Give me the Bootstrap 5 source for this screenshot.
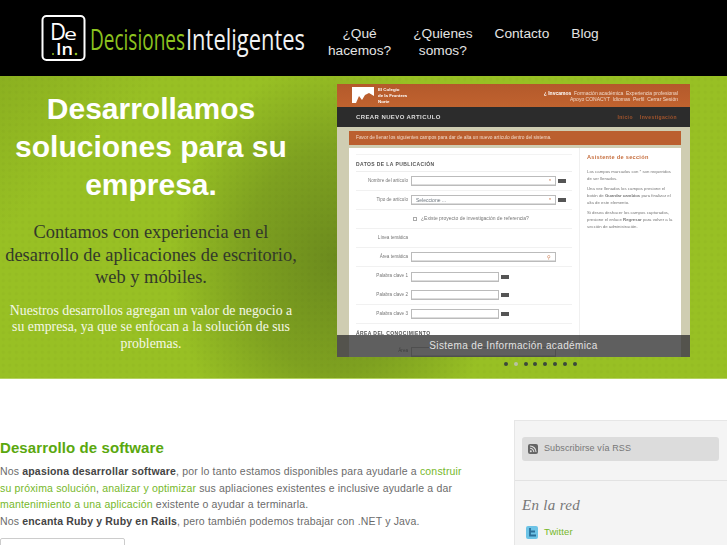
<!DOCTYPE html>
<html lang="es">
<head>
  <meta charset="UTF-8" />
  <meta name="viewport" content="width=device-width, initial-scale=1.0" />
  <title>Decisiones Inteligentes</title>
  <link href="https://cdn.jsdelivr.net/npm/bootstrap@5.3.3/dist/css/bootstrap.min.css" rel="stylesheet" />
  <style>
    body { font-family: "Liberation Sans", Arial, sans-serif; background: #fff; }
    .top-bar { height: 76px; background: #000; padding-left: 41px; }
    .logo-svg { display: block; width: 272px; height: 48px; margin-top: -1px; }
    .top-nav { margin-left: 4px; margin-top: 7px; }
    .top-nav .nav-link { color: #e4e4e4; font-size: 13.7px; line-height: 17px; padding: 0 11px; text-align: center; }
    .hero {
      height: 303px; border-bottom: 1px solid #b5d35f;
      background-color: #98c024;
      background-image:
        radial-gradient(circle, rgba(0,0,0,.02) 1.7px, transparent 2px),
        radial-gradient(ellipse 165px 200px at 335px 185px, rgba(100,130,28,.85) 0%, rgba(100,130,28,.5) 55%, rgba(100,130,28,0) 100%),
        linear-gradient(135deg, #8bb020 0, #98c024 16%, #98c024 100%);
      background-size: 6.5px 6.5px, 100% 100%, 100% 100%;
    }
    .hero-copy { width: 302px; padding-top: 14px; text-align: center; }
    .hero-copy h1 { font-size: 30px; line-height: 38px; font-weight: 700; color: #fff; margin: 0 0 17px; }
    .hero-sub { font-family: "Liberation Serif", serif; font-size: 18.4px; line-height: 22.6px; color: #33392a; margin: 0 0 14px; }
    .hero-note { font-family: "Liberation Serif", serif; font-size: 13.8px; line-height: 16.6px; color: #f4f7e6; margin: 0 8px; }
    .slider-wrap { margin-left: 35px; width: 353px; padding-top: 8px; }
    .shot { height: 273px; overflow: hidden; background: #cfcdb2; position: relative; font-size: 5px; color: #777; }
    .shot-blur { filter: blur(.35px); }
    .shot-head { height: 23px; background: linear-gradient(#b4592b, #c0632f); color: #f0d8c8; padding: 3px 12px 0 15px; }
    .shot-brand { font-weight: 700; color: #fff; line-height: 6px; font-size: 4.4px; }
    .shot-links { line-height: 6px; text-align: right; font-size: 5px; padding-top: 3px; }
    .shot-title { height: 20px; background: #2c2c2c; color: #ddd; font-size: 6px; font-weight: 700; letter-spacing: .4px; padding: 0 13px 0 19px; }
    .shot-title span { color: #a5552c; font-size: 5px; margin-left: 7px; }
    .shot-alert { margin: 4px 9px 0 12px; height: 14px; line-height: 13px; background: #bb5f2f; color: #f1d9c8; padding-left: 7px; font-size: 4.8px; }
    .shot-panel { margin: 3px 9px 0 12px; height: 230px; background: #fff; }
    .shot-main { width: 231px; padding: 6px 7px 0; border-right: 1px solid #f0f0f0; flex: none; }
    .shot-side { padding: 6px 7px; line-height: 7px; font-size: 4.3px; }
    .shot-side h6 { color: #c66e3e; font-size: 5.6px; font-weight: 700; letter-spacing: .3px; margin: 0 0 7px; }
    .shot-side p { margin: 0 0 3px; }
    .shot-h { font-weight: 700; font-size: 5px; letter-spacing: .4px; color: #555; height: 18px; line-height: 18px; border-top: 1px solid #f3f3f3; border-bottom: 1px solid #eee; }
    .shot-row { height: 19px; border-bottom: 1px solid #f1f1f1; }
    .shot-row label { width: 52px; text-align: right; margin-right: 3px; flex: none; font-size: 4.6px; }
    .shot-in { width: 145px; height: 10px; background: #fff; border: 1px solid #bbb; box-shadow: inset 0 -1px #ddd; color: #c66e3e; text-align: right; padding-right: 4px; line-height: 8px; }
    .shot-in.short { width: 88px; }
    .shot-tag { width: 8px; height: 4px; background: #555; margin-left: 2px; }
    .shot-nl { border-bottom: 0; }
    .shot-check { width: 4px; height: 4px; border: 1px solid #aaa; margin: 0 4px 0 57px; }
    .shot-cap { position: absolute; left: 0; right: 0; bottom: 0; height: 22px; line-height: 22px; text-align: center; background: rgba(45,45,45,.76); color: #e2e2e2; font-size: 10px; letter-spacing: .38px; }
    .shot-dots { gap: 5.8px; margin: 5px 0 0 167px; }
    .shot-dots i { width: 4px; height: 4px; border-radius: 50%; background: #3c4a3a; }
    .shot-dots i.on { background: #b9c2a2; }
    .content-area { padding-top: 41px; height: 166px; overflow: hidden; }
    .main-copy { width: 514px; padding-top: 19px; }
    .main-copy h3 { font-size: 15px; line-height: 18px; font-weight: 700; color: #5aa80e; margin: 0 0 6px; letter-spacing: .1px; }
    .main-copy p { font-size: 10.5px; line-height: 16.6px; color: #6b6b6b; letter-spacing: .17px; margin: 0; width: 465px; }
    .main-copy b { color: #444; }
    .main-copy a, .side-box a { color: #76b82a; text-decoration: none; }
    .more-box { width: 125px; height: 30px; margin-top: 9px; background: #fff; border: 1px solid #ccc; border-radius: 2px; }
    .side-box { width: 213px; height: 200px; background: #f4f4f4; border: 1px solid #e6e6e6; border-right: 0; }
    .rss-wrap { height: 60px; padding: 16px 8px 0 7px; border-bottom: 1px solid #e2e2e2; }
    .rss-btn { height: 24px; background: #dcdcdc; border-radius: 3px; color: #777; font-size: 9px; letter-spacing: .1px; padding-left: 6px; gap: 6px; }
    .side-net { padding: 15px 7px; }
    .side-net h4 { font-family: "Liberation Serif", serif; font-style: italic; font-size: 15px; line-height: 18px; color: #777; letter-spacing: .3px; margin: 0 0 11px; }
    .side-net a { font-size: 9.5px; letter-spacing: .1px; gap: 6px; padding-left: 4px; }
  </style>
</head>
<body>
  <header class="top-bar d-flex align-items-center">
    <svg class="logo-svg flex-shrink-0" viewBox="0 0 272 48">
      <rect x="1.5" y="2" width="42" height="44" rx="4" fill="none" stroke="#fff" stroke-width="2"/>
      <text x="9" y="26" font-family="Open Sans, sans-serif" font-size="23" fill="#fff" textLength="16" lengthAdjust="spacingAndGlyphs">D</text>
      <text x="23" y="26" font-family="Open Sans, sans-serif" font-size="16" fill="#fff" textLength="13" lengthAdjust="spacingAndGlyphs">e</text>
      <text x="15" y="41" font-family="Open Sans, sans-serif" font-size="17" font-weight="600" fill="#fff" textLength="17" lengthAdjust="spacingAndGlyphs">In</text>
      <circle cx="35" cy="40" r="1.3" fill="#8cc21f"/>
      <circle cx="12" cy="40" r="1" fill="#8cc21f"/>
      <text x="49" y="36" font-family="Open Sans, sans-serif" font-size="30" fill="#8cc21f" textLength="95" lengthAdjust="spacingAndGlyphs">Decisiones</text>
      <text x="145" y="36" font-family="Open Sans, sans-serif" font-size="30" fill="#f2f2f2" textLength="119" lengthAdjust="spacingAndGlyphs">Inteligentes</text>
    </svg>
    <ul class="nav top-nav flex-nowrap">
      <li class="nav-item"><a class="nav-link" href="#">¿Qué<br>hacemos?</a></li>
      <li class="nav-item"><a class="nav-link" href="#">¿Quienes<br>somos?</a></li>
      <li class="nav-item"><a class="nav-link" href="#">Contacto<br>&nbsp;</a></li>
      <li class="nav-item"><a class="nav-link" href="#">Blog<br>&nbsp;</a></li>
    </ul>
  </header>

  <section class="hero d-flex">
    <div class="hero-copy flex-shrink-0">
      <h1>Desarrollamos soluciones para su empresa.</h1>
      <p class="hero-sub">Contamos con experiencia en el desarrollo de aplicaciones de escritorio, web y móbiles.</p>
      <p class="hero-note">Nuestros desarrollos agregan un valor de negocio a su empresa, ya que se enfocan a la solución de sus problemas.</p>
    </div>
    <div class="slider-wrap flex-shrink-0">
      <div class="shot">
        <div class="shot-blur">
        <div class="shot-head d-flex justify-content-between">
          <div class="d-flex gap-1">
            <svg width="22" height="16" viewBox="0 0 22 16"><path d="M0 0h22v9l-5-3-4 2-3 5-3-4-3 7H0z" fill="#fff"/></svg>
            <div class="shot-brand">El Colegio<br>de la Frontera<br>Norte</div>
          </div>
          <div class="shot-links"><b class="text-white">¿ Invcamos</b> &nbsp;Formación académica &nbsp;Experiencia profesional<br>Apoyo CONACYT &nbsp;Idiomas &nbsp;Perfil &nbsp;Cerrar Sesión</div>
        </div>
        <div class="shot-title d-flex justify-content-between align-items-center">CREAR NUEVO ARTICULO<div><span>Inicio</span><span>Investigación</span></div></div>
        <div class="shot-alert">Favor de llenar los siguientes campos para dar de alta un nuevo artículo dentro del sistema.</div>
        <div class="shot-panel d-flex">
          <div class="shot-main">
            <div class="shot-h">DATOS DE LA PUBLICACIÓN</div>
            <div class="shot-row d-flex align-items-center"><label>Nombre del artículo</label><div class="shot-in">*</div><div class="shot-tag"></div></div>
            <div class="shot-row d-flex align-items-center"><label>Tipo de artículo</label><div class="shot-in d-flex justify-content-between"><span class="text-secondary ps-1">Seleccione ...</span>*</div><div class="shot-tag"></div></div>
            <div class="shot-row d-flex align-items-center"><div class="shot-check"></div>¿Existe proyecto de investigación de referencia?</div>
            <div class="shot-row d-flex align-items-center"><label>Línea temática</label></div>
            <div class="shot-row d-flex align-items-center"><label>Área temática</label><div class="shot-in">⚲</div></div>
            <div class="shot-row shot-nl d-flex align-items-center"><label>Palabra clave 1</label><div class="shot-in short"></div><div class="shot-tag"></div></div>
            <div class="shot-row d-flex align-items-center"><label>Palabra clave 2</label><div class="shot-in short"></div><div class="shot-tag"></div></div>
            <div class="shot-row d-flex align-items-center"><label>Palabra clave 3</label><div class="shot-in short"></div><div class="shot-tag"></div></div>
            <div class="shot-h border-0">ÁREA DEL CONOCIMIENTO</div>
            <div class="shot-row shot-nl d-flex align-items-center"><label>Área</label><div class="shot-in"></div></div>
          </div>
          <div class="shot-side">
            <h6>Asistente de sección</h6>
            <p>Los campos marcados con * son requeridos de ser llenados.</p>
            <p>Una vez llenados los campos presione el botón de <b>Guardar cambios</b> para finalizar el alta de este elemento.</p>
            <p>Si desea deshacer los campos capturados, presione el enlace <b>Regresar</b> para volver a la sección de administración.</p>
          </div>
        </div>
        </div>
        <div class="shot-cap">Sistema de Información académica</div>
      </div>
      <div class="shot-dots d-flex"><i></i><i class="on"></i><i></i><i></i><i></i><i></i><i></i><i></i></div>
    </div>
  </section>

  <section class="content-area d-flex">
    <div class="main-copy flex-shrink-0">
      <h3>Desarrollo de software</h3>
      <p>Nos <b>apasiona desarrollar software</b>, por lo tanto estamos disponibles para ayudarle a <a href="#">construir su próxima solución</a>, <a href="#">analizar y optimizar</a> sus apliaciones existentes e inclusive ayudarle a dar <a href="#">mantenimiento a una aplicación</a> existente o ayudar a terminarla.<br>Nos <b>encanta Ruby y Ruby en Rails</b>, pero también podemos trabajar con .NET y Java.</p>
      <div class="more-box"></div>
    </div>
    <aside class="side-box flex-shrink-0">
      <div class="rss-wrap">
        <div class="rss-btn d-flex align-items-center">
          <svg width="10" height="10" viewBox="0 0 10 10"><rect width="10" height="10" rx="2" fill="#666"/><circle cx="2.8" cy="7.2" r="1" fill="#ddd"/><path d="M2 4.2a3.8 3.8 0 0 1 3.8 3.8M2 2a6 6 0 0 1 6 6" fill="none" stroke="#ddd" stroke-width="1.1"/></svg>
          Subscribirse vía RSS
        </div>
      </div>
      <div class="side-net">
        <h4>En la red</h4>
        <a class="d-flex align-items-center" href="#">
          <svg width="12" height="13" viewBox="0 0 12 13"><rect width="12" height="13" rx="2" fill="#6cc3e6"/><path d="M4 2v7.5h6M4 5.5h5" fill="none" stroke="#2a6f99" stroke-width="1.8"/></svg>
          Twitter
        </a>
      </div>
    </aside>
  </section>
  <script src="https://cdn.jsdelivr.net/npm/bootstrap@5.3.3/dist/js/bootstrap.bundle.min.js"></script>
</body>
</html>
